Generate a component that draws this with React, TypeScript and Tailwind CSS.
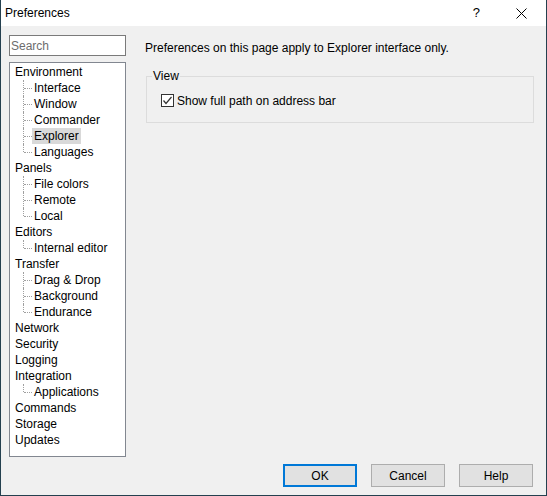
import React from "react";

type Node = { label: string; children?: string[] };

const tree: Node[] = [
  { label: "Environment", children: ["Interface", "Window", "Commander", "Explorer", "Languages"] },
  { label: "Panels", children: ["File colors", "Remote", "Local"] },
  { label: "Editors", children: ["Internal editor"] },
  { label: "Transfer", children: ["Drag & Drop", "Background", "Endurance"] },
  { label: "Network" },
  { label: "Security" },
  { label: "Logging" },
  { label: "Integration", children: ["Applications"] },
  { label: "Commands" },
  { label: "Storage" },
  { label: "Updates" },
];

const font = { fontFamily: '"Liberation Sans", Arial, sans-serif' };

function ChildRow({ label, last, selected }: { label: string; last: boolean; selected: boolean }) {
  return (
    <div className="relative flex h-4 items-center pl-[17px]">
      {/* tree connector */}
      <span
        className={`absolute left-[8px] top-0 w-0 border-l border-dotted border-[#a0a0a0] ${last ? "h-[8px]" : "h-4"}`}
      />
      <span className="absolute left-[9px] top-[8px] w-[8px] border-t border-dotted border-[#a0a0a0]" />
      <span className={`px-[2px] leading-4 ${selected ? "bg-[#d9d9d9]" : ""}`}>{label}</span>
    </div>
  );
}

function Button({ label, primary }: { label: string; primary?: boolean }) {
  return (
    <button
      className={`h-[23px] w-[74px] bg-[#e1e1e1] text-[12px] text-black ${
        primary ? "border-2 border-[#0078d7]" : "border border-[#adadad]"
      }`}
    >
      {label}
    </button>
  );
}

export default function App() {
  return (
    <div
      className="flex h-[496px] w-[547px] flex-col border-x border-b border-[#24404f] bg-[#f0f0f0] text-[12px] text-black"
      style={font}
    >
      {/* Title bar */}
      <div className="flex h-[26px] items-center bg-white pl-[4px]">
        <span className="flex-1 text-[12px]">Preferences</span>
        <span className="mr-[36px] text-[13px]">?</span>
        <svg width="11" height="11" viewBox="0 0 11 11" className="mr-[19px]">
          <path d="M0.5 0.5 L10.5 10.5 M10.5 0.5 L0.5 10.5" stroke="#000" strokeWidth="1" />
        </svg>
      </div>

      {/* Body */}
      <div className="flex h-[431px] pl-[8px] pt-[9px]">
        <div className="flex w-[117px] flex-col gap-[6px]">
          <div className="flex h-[21px] items-center border border-[#7a7a7a] bg-white pl-[1px] text-[#6d6d6d]">
            Search
          </div>
          <div className="h-[395px] border border-[#828790] bg-white pl-[5px] pt-[1px]">
            {tree.map((n) => (
              <div key={n.label}>
                <div className="h-4 leading-4">{n.label}</div>
                {n.children?.map((c, i) => (
                  <ChildRow
                    key={c}
                    label={c}
                    last={i === n.children!.length - 1}
                    selected={c === "Explorer"}
                  />
                ))}
              </div>
            ))}
          </div>
        </div>

        <div className="flex flex-1 flex-col pl-[19px] pr-[12px]">
          <div className="mt-[5px] h-4 leading-4">Preferences on this page apply to Explorer interface only.</div>
          <div className="relative ml-[1px] mt-[20px] h-[47px] border border-[#dcdcdc]">
            <span className="absolute -top-[9px] left-[5px] bg-[#f0f0f0] px-[1px] leading-4">View</span>
            <label className="ml-[14px] mt-[17px] flex h-[13px] items-center gap-[3px]">
              <svg width="13" height="13" viewBox="0 0 13 13">
                <rect x="0.5" y="0.5" width="12" height="12" fill="#fff" stroke="#333" />
                <path d="M2.5 6.5 L5 9.5 L10.5 3" fill="none" stroke="#333" strokeWidth="1.2" />
              </svg>
              <span>Show full path on address bar</span>
            </label>
          </div>
        </div>
      </div>

      {/* Footer */}
      <div className="flex justify-end gap-[14px] pr-[13px] pt-[7px]">
        <Button label="OK" primary />
        <Button label="Cancel" />
        <Button label="Help" />
      </div>
    </div>
  );
}
